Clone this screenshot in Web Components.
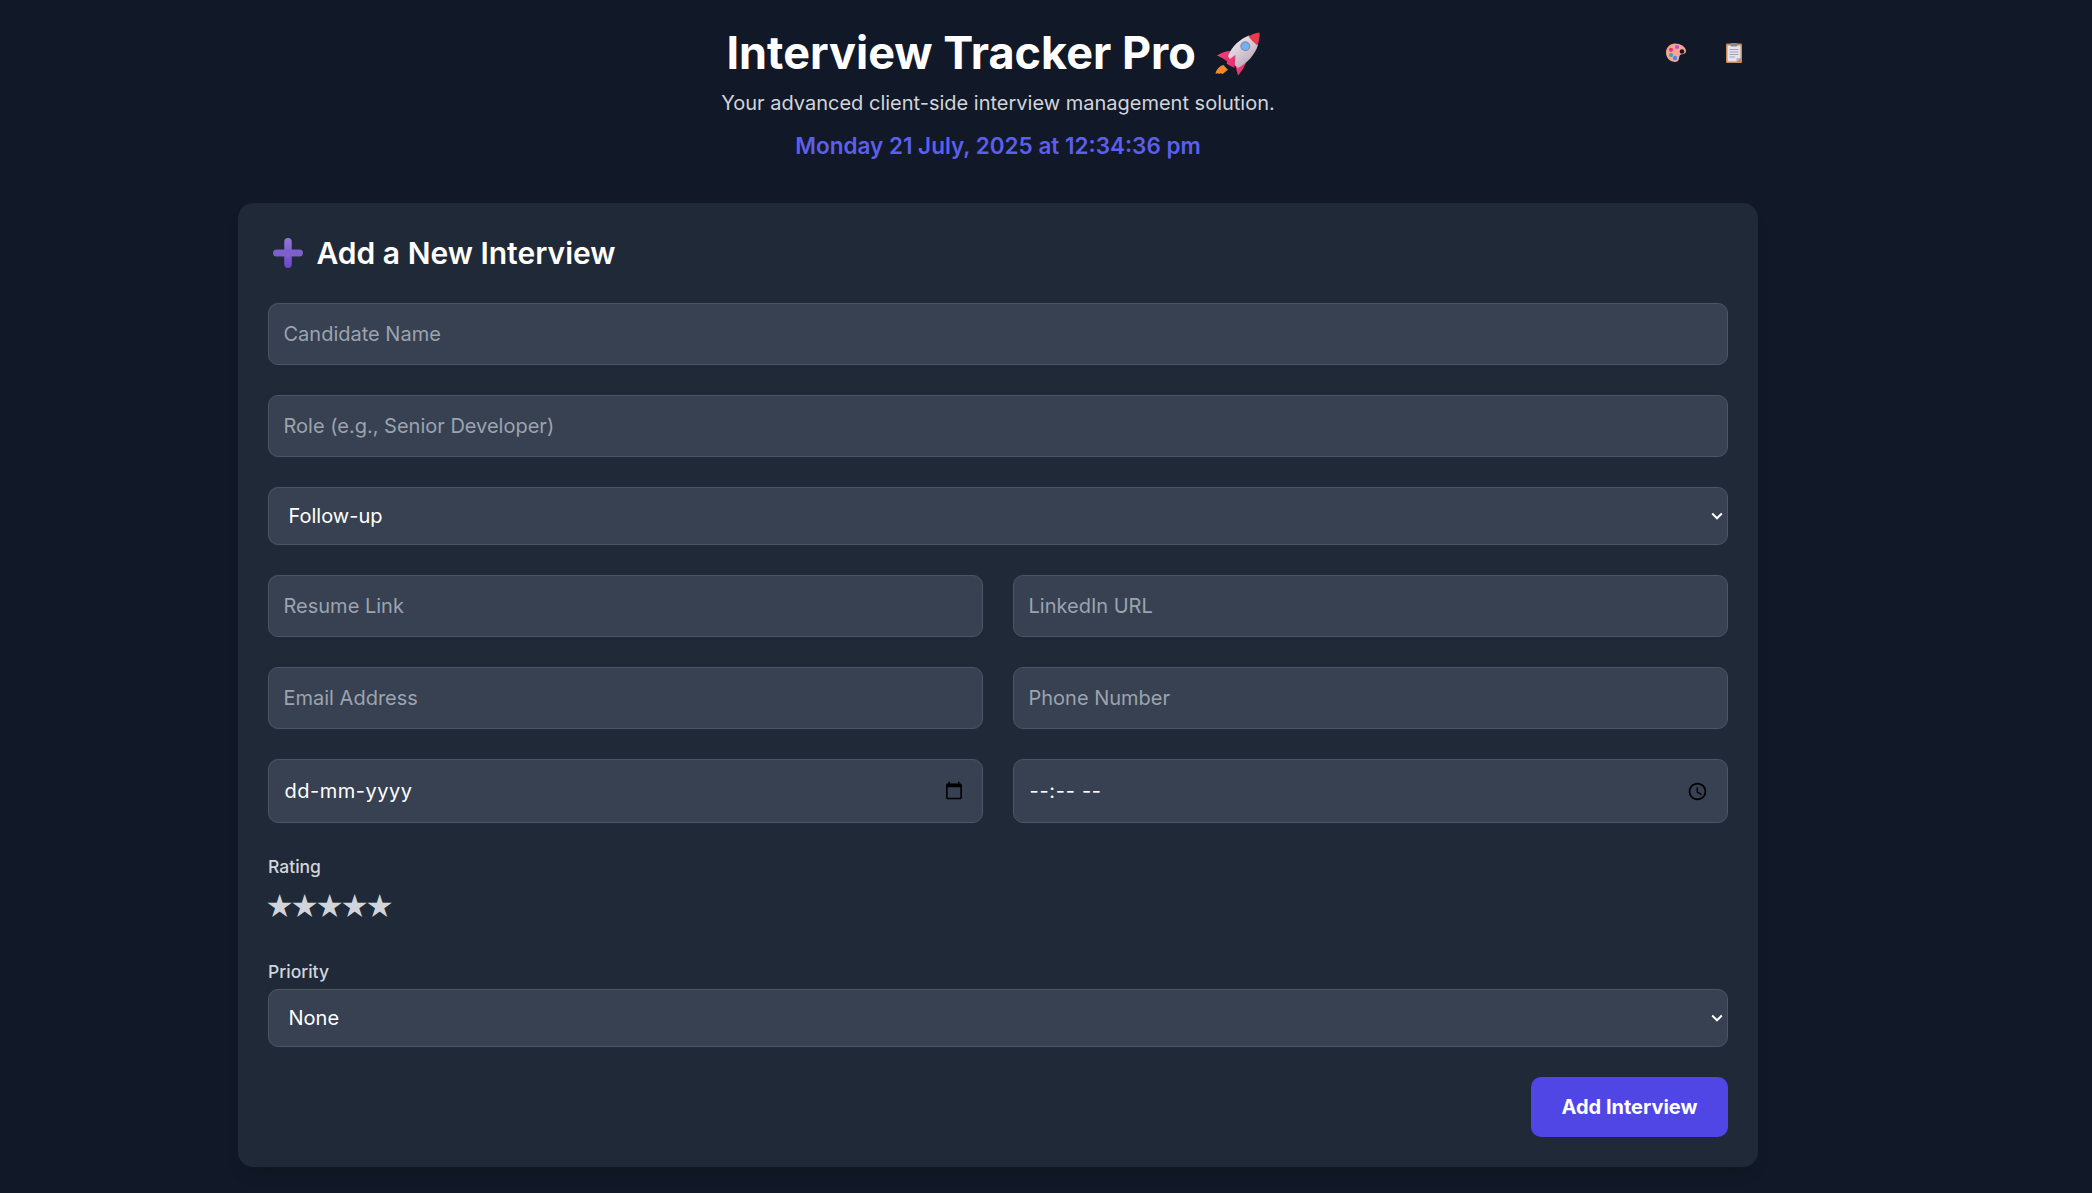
<!DOCTYPE html>
<html lang="en-GB">
<head>
<meta charset="utf-8">
<title>Interview Tracker Pro</title>
<style>
  html, body { margin: 0; background: #111827; }
  body { font-family: Inter, "Noto Sans", sans-serif; color: #fff; height: 1193px; overflow: hidden; }
</style>
</head>
<body>
<tracker-app>
  <tracker-header slot="header"></tracker-header>
  <interview-form></interview-form>
</tracker-app>

<script>
const fieldBase = `
  input, select {
    box-sizing: border-box;
    width: 100%;
    display: block;
    background-color: #374151;
    border: 1px solid #4b5563;
    border-radius: 10px;
    color: #fff;
    font-family: inherit;
    font-size: 20px;
    outline: none;
    margin: 0;
  }
  input::placeholder { color: #9ca3af; }
`;

class TrackerApp extends HTMLElement {
  constructor() {
    super();
    this.attachShadow({ mode: 'open' });
  }

  connectedCallback() {
    this.shadowRoot.innerHTML = `
      <style>
        :host { display: block; width: 1996px; }
        .wrap { box-sizing: border-box; width: 1520px; margin: 0 auto; }
      </style>
      <div class="wrap">
        <slot name="header"></slot>
        <slot></slot>
      </div>
    `;
  }
}

class TrackerHeader extends HTMLElement {
  constructor() {
    super();
    this.attachShadow({ mode: 'open' });
  }

  connectedCallback() {
    this.shadowRoot.innerHTML = `
      <style>
        :host { display: grid; grid-template-columns: 1fr auto 1fr; box-sizing: border-box; height: 203px; padding-top: 24px; }
        .title { grid-column: 2; text-align: center; }
        h1 { margin: 0; font-size: 45px; line-height: 58px; font-weight: 700; color: #fff; white-space: nowrap; }
        h1 svg { display: inline-block; width: 46px; height: 46px; margin: 0 9px 0 8px; vertical-align: -8px; }
        p { margin: 6px 0 0; font-size: 20px; line-height: 30px; color: #d1d5db; }
        .clock { margin-top: 13px; font-size: 22.5px; line-height: 30px; font-weight: 600; color: #5c5fec; }
        .tools { grid-column: 3; justify-self: end; display: flex; align-items: flex-start; gap: 40px; padding: 19px 16px 0 0; }
        button { display: block; background: none; border: 0; padding: 0; cursor: pointer; }
        button svg { display: block; }
      </style>
      <div class="title">
        <h1>Interview Tracker Pro <svg viewBox="5 15 46 46" role="img" aria-label="rocket">
          <defs>
            <linearGradient id="hull" x1="0.2" y1="0.1" x2="0.8" y2="0.9">
              <stop offset="0" stop-color="#f1e8ee"/>
              <stop offset="1" stop-color="#b9a6b8"/>
            </linearGradient>
            <linearGradient id="fin" x1="0" y1="0" x2="1" y2="1">
              <stop offset="0" stop-color="#f8487a"/>
              <stop offset="1" stop-color="#e0256a"/>
            </linearGradient>
          </defs>
          <path d="M5.500 58 C6 54 9 50 13.500 49 L18 54 C15 55 15 57 12.500 58 C11 57 10 57 9 58 C8 57 7 57 5.500 58Z" fill="#f08a2c"/>
          <path d="M7 39.500 C11 37 16 35 21 35 L19 47.500 C16 44 11 41 7 39.500Z" fill="url(#fin)"/>
          <path d="M28 59.500 C26.500 55 25.500 50 25.500 45 L37 42 C36.500 48 32 55 28 59.500Z" fill="url(#fin)"/>
          <path d="M18 40 C22 30 30 23 39 19.500 L48 29 C45 39 37 47 28 52 C24 49 20 45 18 40Z" fill="url(#hull)"/>
          <path d="M16.500 47.500 C18 44 22 41 25.500 39 C25 43 25 47 24.500 52 C22 51 19 49 16.500 47.500Z" fill="url(#fin)"/>
          <path d="M38.500 20.500 C42 18 46 17 49.500 16.500 C50 20 49 25 47.500 29.500 C44.500 27 41 24 38.500 20.500Z" fill="#e93a52"/>
          <circle cx="35.300" cy="30.300" r="5" fill="#8d8fb0"/>
          <circle cx="35.300" cy="30.300" r="3.600" fill="#6db3f5"/>
        </svg></h1>
        <p>Your advanced client-side interview management solution.</p>
        <div class="clock">Monday 21 July, 2025 at 12:34:36 pm</div>
      </div>
      <div class="tools">
        <button title="Theme">
          <svg width="20" height="20" viewBox="0 0 20 20" role="img" aria-label="palette">
            <path d="M9 .5 C14 .5 20 3.500 20 8 C20 11 17 11 15 11.500 C13 12 13.500 14 13 16 C12.500 19 9 19.500 6.500 18.500 C2.500 17.500 0 13.500 0 9.500 C0 4.500 4 .5 9 .5Z" fill="#f7a592"/>
            <circle cx="16" cy="8.500" r="2.300" fill="#111827"/>
            <circle cx="11" cy="4" r="2.100" fill="#b455d8"/>
            <circle cx="5" cy="6.800" r="2.100" fill="#ee2f82"/>
            <circle cx="5" cy="12" r="2" fill="#2fa8a8"/>
            <circle cx="9" cy="15" r="2.200" fill="#3f8ff0"/>
          </svg>
        </button>
        <button title="Copy">
          <svg width="16" height="20" viewBox="0 0 16 20" role="img" aria-label="clipboard">
            <rect x="0" y="0.500" width="16" height="19.500" rx="1" fill="#c78a58"/>
            <path d="M1.500 2.500 H14.500 V15 L10.500 18.500 H1.500Z" fill="#e6e3ee"/>
            <path d="M14.500 15 L10.500 18.500 V15Z" fill="#b9b4c6"/>
            <rect x="4.500" y="0" width="7" height="3.500" rx="1" fill="#8b8794"/>
            <path d="M3.500 6.500H12.500M3.500 9H12.500M3.500 11.500H12.500M3.500 14H9" stroke="#a3a0ae" stroke-width="1"/>
          </svg>
        </button>
      </div>
    `;
  }
}

class TextField extends HTMLElement {
  constructor() {
    super();
    this.attachShadow({ mode: 'open' });
  }

  connectedCallback() {
    const placeholder = this.getAttribute('placeholder') || '';
    this.shadowRoot.innerHTML = `
      <style>
        :host { display: block; }
        ${fieldBase}
        input { height: 62px; padding: 0 14.5px; }
      </style>
      <input type="text" placeholder="${placeholder}">
    `;
  }
}

class DateTimeField extends HTMLElement {
  constructor() {
    super();
    this.attachShadow({ mode: 'open' });
  }

  connectedCallback() {
    const type = this.getAttribute('type') || 'date';
    const mask = this.getAttribute('mask');
    const spacing = this.getAttribute('spacing') || '0';
    this.shadowRoot.innerHTML = `
      <style>
        :host { display: block; position: relative; }
        ${fieldBase}
        input { height: 64px; padding: 0 16px 0 15px; }
        input::-webkit-datetime-edit { visibility: hidden; }
        .mask { position: absolute; left: 16.5px; top: 0; bottom: 0; display: flex; align-items: center; font-size: 20px; letter-spacing: ${spacing}px; color: #fff; pointer-events: none; }
      </style>
      <input type="${type}">
      <span class="mask">${mask}</span>
    `;
  }
}

class SelectField extends HTMLElement {
  constructor() {
    super();
    this.attachShadow({ mode: 'open' });
  }

  connectedCallback() {
    const options = (this.getAttribute('options') || '').split('|');
    const picked = this.getAttribute('value');
    this.shadowRoot.innerHTML = `
      <style>
        :host { display: block; position: relative; }
        ${fieldBase}
        select { appearance: none; height: 58px; padding: 0 19.5px; }
        svg { position: absolute; right: 5px; top: 25px; pointer-events: none; }
      </style>
      <select>
        ${options.map((o) => `<option ${o === picked ? 'selected' : ''}>${o}</option>`).join('')}
      </select>
      <svg width="12" height="8" viewBox="0 0 12 8" aria-hidden="true">
        <path d="M1.200 1.500 6 6.300 10.800 1.500" fill="none" stroke="#fff" stroke-width="2"/>
      </svg>
    `;
  }
}

class StarRating extends HTMLElement {
  constructor() {
    super();
    this.attachShadow({ mode: 'open' });
  }

  connectedCallback() {
    this.shadowRoot.innerHTML = `
      <style>
        :host { display: flex; color: #d1d5db; font-size: 28px; line-height: 44px; height: 43px; margin-left: -3px; }
        span { letter-spacing: -4.3px; cursor: pointer; }
      </style>
      ${'<span>★</span>'.repeat(5)}
    `;
  }
}

class InterviewForm extends HTMLElement {
  constructor() {
    super();
    this.attachShadow({ mode: 'open' });
  }

  connectedCallback() {
    this.shadowRoot.innerHTML = `
      <style>
        :host { display: block; box-sizing: border-box; background: #1f2937; border-radius: 15px; padding: 30px; height: 964px; box-shadow: 0 10px 15px -3px rgba(0,0,0,.1); }
        h2 { display: flex; align-items: center; gap: 13.5px; margin: 0 0 30px; font-size: 30px; line-height: 40px; font-weight: 600; color: #fff; }
        h2 svg { display: block; margin-left: 5px; }
        form { display: flex; flex-direction: column; gap: 30px; }
        .grid { display: grid; grid-template-columns: 1fr 1fr; gap: 30px; }
        label { display: block; font-size: 17.5px; line-height: 28px; font-weight: 500; color: #d1d5db; }
        .rating label { margin-bottom: 4px; }
        .priority label { margin-bottom: 3px; }
        .actions { display: flex; justify-content: flex-end; }
        button { width: 197px; height: 60px; background: #4f46e5; border: 0; border-radius: 10px; color: #fff; font-family: inherit; font-size: 20px; font-weight: 700; cursor: pointer; }
      </style>
      <h2>
        <svg width="30" height="30" viewBox="0 0 30 30" aria-hidden="true">
          <defs>
            <linearGradient id="plus" x1="0" y1="0" x2="0" y2="1">
              <stop offset="0" stop-color="#8f78d8"/>
              <stop offset="1" stop-color="#6f45cb"/>
            </linearGradient>
          </defs>
          <rect x="11.250" y="0" width="7.500" height="30" rx="3.750" fill="url(#plus)"/>
          <rect x="0" y="11.500" width="30" height="7" rx="3.500" fill="#7d60c9"/>
        </svg>
        Add a New Interview
      </h2>
      <form>
        <text-field placeholder="Candidate Name"></text-field>
        <text-field placeholder="Role (e.g., Senior Developer)"></text-field>
        <select-field value="Follow-up" options="Screening|Technical|Follow-up|HR|Final"></select-field>
        <div class="grid">
          <text-field placeholder="Resume Link"></text-field>
          <text-field placeholder="LinkedIn URL"></text-field>
          <text-field placeholder="Email Address"></text-field>
          <text-field placeholder="Phone Number"></text-field>
          <datetime-field type="date" mask="dd-mm-yyyy" spacing="0.5"></datetime-field>
          <datetime-field type="time" mask="--:-- --" spacing="0.7"></datetime-field>
        </div>
        <div class="rating">
          <label>Rating</label>
          <star-rating></star-rating>
        </div>
        <div class="priority">
          <label>Priority</label>
          <select-field value="None" options="None|Low|Medium|High"></select-field>
        </div>
        <div class="actions"><button type="button">Add Interview</button></div>
      </form>
    `;
  }
}

customElements.define('tracker-app', TrackerApp);
customElements.define('tracker-header', TrackerHeader);
customElements.define('text-field', TextField);
customElements.define('datetime-field', DateTimeField);
customElements.define('select-field', SelectField);
customElements.define('star-rating', StarRating);
customElements.define('interview-form', InterviewForm);
</script>
</body>
</html>
